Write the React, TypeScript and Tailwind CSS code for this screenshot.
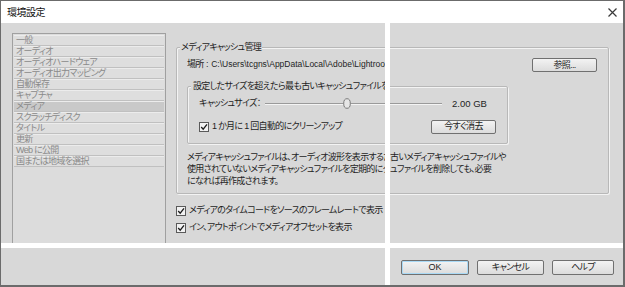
import type { ReactNode } from "react";

const pages = [
  "一般",
  "オーディオ",
  "オーディオハードウェア",
  "オーディオ出力マッピング",
  "自動保存",
  "キャプチャ",
  "メディア",
  "スクラッチディスク",
  "タイトル",
  "更新",
  "Web に公開",
  "国または地域を選択",
];

function CheckBox() {
  return (
    <span className="inline-flex h-[10px] w-[10px] shrink-0 items-center justify-center border border-[#5a5a5a] bg-[#f2f2f2]">
      <svg viewBox="0 0 8 8" className="h-[8px] w-[8px]">
        <path d="M1.2 4 L3.2 6.2 L7 1.4" fill="none" stroke="#1c1c1c" strokeWidth="1.3" />
      </svg>
    </span>
  );
}

function Button({ children, className = "" }: { children: ReactNode; className?: string }) {
  return (
    <div
      className={`flex shrink-0 items-center justify-center rounded-[2px] border border-[#707070] bg-linear-to-b from-[#f3f3f3] to-[#dcdcdc] leading-none whitespace-nowrap text-[#1c1c1c] ${className}`}
    >
      {children}
    </div>
  );
}

export default function App() {
  return (
    <div className="relative h-[287px] w-[625px] overflow-hidden border-t border-r-2 border-b-2 border-l border-[#6b6b6b] bg-[#d8d8d8] font-['Liberation_Sans','Noto_Sans_CJK_JP',sans-serif] text-[9px] tracking-[-0.7px] whitespace-nowrap text-[#1e1e1e] [font-feature-settings:'palt']">
      {/* title bar */}
      <div className="flex h-[22px] items-center justify-between bg-white pr-[6px] pl-[6px]">
        <span className="text-[10px] tracking-[-0.5px] text-[#111]">環境設定</span>
        <svg viewBox="0 0 9 9" className="h-[9px] w-[9px]">
          <path d="M0.5 0.5 L8.5 8.5 M8.5 0.5 L0.5 8.5" stroke="#3a3a3a" strokeWidth="1.2" />
        </svg>
      </div>

      {/* body */}
      <div className="flex h-[220px] overflow-hidden pt-[10px] pl-[11px]">
        <div className="h-[260px] w-[154px] shrink-0 border border-[#a0a0a0] bg-[#dcdcdc] p-[1px]">
          {pages.map((page) => (
            <div
              key={page}
              className={`flex h-[11px] items-center border-t border-b border-t-[#ececec] border-b-[#c0c0c0] pl-[2px] leading-none text-[#8a8a8a] ${
                page === "メディア" ? "bg-[#c9c9c9]" : "bg-[#dedede]"
              }`}
            >
              {page}
            </div>
          ))}
        </div>

        <div className="ml-[10px] flex w-[433px] flex-col">
          <fieldset className="mt-[8px] rounded-[2px] border border-[#b8b8b8] pr-[11px] pb-[6px] pl-[10px] shadow-[inset_1px_1px_0_#f3f3f3,1px_1px_0_#f3f3f3]">
            <legend className="-ml-[7px] bg-[#d8d8d8] px-[1px] leading-[12px]">メディアキャッシュ管理</legend>

            <div className="mt-[5px] flex h-[14px] items-center">
              <div className="w-[198px] overflow-hidden">
                場所<span className="tracking-normal"> : </span>
                <span className="text-[8.5px] tracking-normal">C:\Users\tcgns\AppData\Local\Adobe\Lightroom\Caches</span>
              </div>
              <Button className="ml-auto h-[14px] w-[65px]">参照...</Button>
            </div>

            <fieldset className="mt-[8px] w-[321px] rounded-[2px] border border-[#b8b8b8] pr-[11px] pb-[9px] pl-[11px] shadow-[inset_1px_1px_0_#f3f3f3,1px_1px_0_#f3f3f3]">
              <legend className="-ml-[8px] w-[194px] overflow-hidden bg-[#d8d8d8] px-[2px] leading-[12px]">
                設定したサイズを超えたら最も古いキャッシュファイルを自動的に削除
              </legend>
              <div className="mt-[5px] flex h-[14px] items-center">
                <span className="w-[66px] shrink-0">キャッシュサイズ：</span>
                <div className="relative h-[10px] w-[177px] shrink-0">
                  <div className="absolute top-[4px] right-0 left-0 h-[2px] border-t border-b border-t-[#9a9a9a] border-b-[#f4f4f4]" />
                  <svg viewBox="0 0 8 11" className="absolute top-[-1px] left-[78px] h-[11px] w-[8px]">
                    <ellipse cx="4" cy="5.5" rx="3.3" ry="4.8" fill="#e6e6e6" stroke="#7a7a7a" strokeWidth="1" />
                  </svg>
                </div>
                <span className="ml-[10px] text-[9.5px] tracking-normal">2.00 GB</span>
              </div>
              <div className="mt-[8px] flex h-[15px] items-center">
                <CheckBox />
                <span className="ml-[3px]">1 か月に 1 回自動的にクリーンアップ</span>
                <Button className="ml-auto h-[14px] w-[65px]">今すぐ消去</Button>
              </div>
            </fieldset>

            <div className="mt-[7px] leading-[12px]">
              <div className="flex">
                <div className="w-[198px] shrink-0 overflow-hidden">メディアキャッシュファイルは、オーディオ波形を表示するため</div>
                <div className="ml-[5px]">古いメディアキャッシュファイルや</div>
              </div>
              <div className="flex">
                <div className="w-[198px] shrink-0 overflow-hidden">使用されていないメディアキャッシュファイルを定期的にクリーンアップ</div>
                <div className="ml-[5px]">ュファイルを削除しても、必要</div>
              </div>
              <div>になれば再作成されます。</div>
            </div>
          </fieldset>

          <div className="mt-[8px] flex h-[17px] items-center">
            <CheckBox />
            <span className="ml-[3px]">メディアのタイムコードをソースのフレームレートで表示</span>
          </div>
          <div className="flex h-[17px] items-center">
            <CheckBox />
            <span className="ml-[3px]">イン、アウトポイントでメディアオフセットを表示</span>
          </div>
        </div>
      </div>

      <div className="h-[5px]" />

      {/* buttons */}
      <div className="flex h-[37px] items-start justify-end gap-[8px] pt-[12px] pr-[9px]">
        <Button className="h-[15px] w-[68px] border-[#3c7fb1] tracking-normal shadow-[inset_0_0_0_1px_#a9d9f5]">OK</Button>
        <Button className="h-[15px] w-[67px]">キャンセル</Button>
        <Button className="h-[15px] w-[62px]">ヘルプ</Button>
      </div>

      {/* stitch seams of the screenshot */}
      <div className="absolute top-[-1px] bottom-[-2px] left-[384px] w-[5px] bg-white" />
      <div className="absolute top-[242px] right-[-2px] left-[-1px] h-[5px] bg-white" />
    </div>
  );
}
